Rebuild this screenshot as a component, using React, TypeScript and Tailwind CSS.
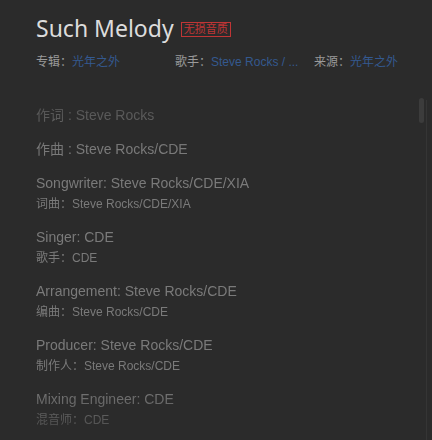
const sans = 'font-["Liberation_Sans","Noto_Sans_CJK_SC",sans-serif]'

type Line = { main: string; sub?: string }

const lines: Line[] = [
  { main: '作词 : Steve Rocks' },
  { main: '作曲 : Steve Rocks/CDE' },
  { main: 'Songwriter: Steve Rocks/CDE/XIA', sub: '词曲：Steve Rocks/CDE/XIA' },
  { main: 'Singer: CDE', sub: '歌手：CDE' },
  { main: 'Arrangement: Steve Rocks/CDE', sub: '编曲：Steve Rocks/CDE' },
  { main: 'Producer: Steve Rocks/CDE', sub: '制作人：Steve Rocks/CDE' },
  { main: 'Mixing Engineer: CDE', sub: '混音师：CDE' },
]

export default function App() {
  return (
    <div className={`relative h-[440px] w-[432px] overflow-hidden bg-[#2b2b2b] ${sans}`}>
      {/* Header */}
      <div className="px-9 pt-[12px]">
        <div className="flex items-center gap-[7px]">
          <h1 className='font-["Noto_Sans","Noto_Sans_CJK_SC",sans-serif] text-[23px] leading-[32px] text-[#dcdcdc]'>
            Such Melody
          </h1>
          <span className="mt-[2px] border border-[#c03535] px-[2px] text-[11px] leading-[13px] text-[#c03535]">
            无损音质
          </span>
        </div>

        <div className="mt-[9px] grid grid-cols-[139px_139px_1fr] whitespace-nowrap text-[12px] leading-[18px]">
          <p className="text-[#9a9a9a]">
            专辑：<span className="text-[#34598f]">光年之外</span>
          </p>
          <p className="text-[#9a9a9a]">
            歌手：<span className="text-[#34598f]">Steve Rocks / ...</span>
          </p>
          <p className="text-[#9a9a9a]">
            来源：<span className="text-[#34598f]">光年之外</span>
          </p>
        </div>
      </div>

      {/* Lyrics */}
      <div className="mt-[33px] h-[340px] overflow-hidden pl-9 [mask-image:linear-gradient(to_bottom,rgba(0,0,0,0.45)_0px,#000_45px,#000_280px,rgba(0,0,0,0.4)_330px)]">
        <div className="flex flex-col gap-[12px]">
          {lines.map((l) => (
            <div key={l.main}>
              <p className="text-[14px] leading-[22px] text-[#7a7a7a]">{l.main}</p>
              {l.sub && <p className="text-[12px] leading-[20px] text-[#7a7a7a]">{l.sub}</p>}
            </div>
          ))}
        </div>
      </div>

      {/* Scrollbar */}
      <div className="absolute right-[5px] top-[100px] bottom-0 w-px bg-[#353535]" />
      <div className="absolute right-[8px] top-[98px] h-[25px] w-[5px] rounded-full bg-[#3c3c3c]" />
    </div>
  )
}
